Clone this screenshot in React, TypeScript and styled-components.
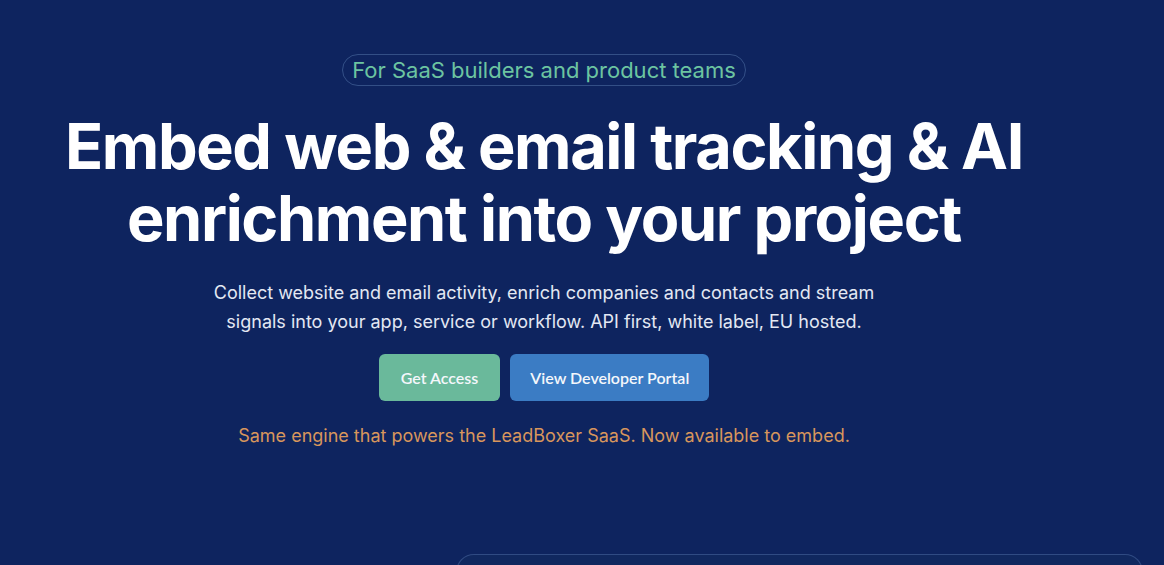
import React from "react"
import styled, {createGlobalStyle} from "styled-components"

const GlobalStyle = createGlobalStyle`
  html, body {
    margin: 0;
    padding: 0;
    background: #0e245f;
    font-family: Inter, "Noto Sans", sans-serif;
    color: #fff;
  }
`

const Page = styled.div`
  height: 565px;
  overflow: hidden;
`

const Hero = styled.section`
  width: 1088px;
  display: flex;
  flex-direction: column;
  align-items: center;
  padding-top: 54px;
  text-align: center;
`

const Pill = styled.div`
  display: inline-flex;
  align-items: center;
  height: 30px;
  padding: 0 9px;
  border: 1px solid rgba(120, 160, 210, 0.35);
  border-radius: 999px;
  color: #6cc4a1;
  font-size: 22px;
  line-height: 1;
`

const Title = styled.h1`
  margin: 24px 0 0;
  font-size: 63px;
  line-height: 72px;
  font-weight: 700;
  letter-spacing: -1.4px;
  color: #ffffff;
`

const Lead = styled.p`
  margin: 24px 0 0;
  width: 680px;
  font-size: 18px;
  line-height: 29px;
  color: #e3e8f3;
`

const Actions = styled.div`
  display: flex;
  gap: 10px;
  margin-top: 18px;
`

const Button = styled.button<{$tone: "green" | "blue"}>`
  height: 47px;
  padding: 0 ${p => (p.$tone === "green" ? 22 : 20)}px;
  border: none;
  border-radius: 6px;
  font-family: Lato, Inter, sans-serif;
  font-size: 16px;
  font-weight: 600;
  color: #f4f7fb;
  background: ${p => (p.$tone === "green" ? "#6ab99b" : "#3b7cc4")};
  cursor: pointer;
`

const Note = styled.p`
  margin: 24px 0 0;
  font-size: 18px;
  color: #d8965c;
`

const CardRow = styled.div`
  display: flex;
  padding: 0 21px 0 456px;
  margin-top: 108px;
`

const Card = styled.div`
  flex: 1;
  height: 200px;
  border: 1px solid rgba(110, 140, 200, 0.35);
  border-radius: 18px;
  background: #10285f;
`

export default function App() {
  return (
    <Page>
      <GlobalStyle />
      <Hero>
        <Pill>For SaaS builders and product teams</Pill>
        <Title>
          Embed web &amp; email tracking &amp; AI
          <br />
          enrichment into your project
        </Title>
        <Lead>
          Collect website and email activity, enrich companies and contacts and
          stream signals into your app, service or workflow. API first, white
          label, EU hosted.
        </Lead>
        <Actions>
          <Button $tone="green">Get Access</Button>
          <Button $tone="blue">View Developer Portal</Button>
        </Actions>
        <Note>Same engine that powers the LeadBoxer SaaS. Now available to embed.</Note>
      </Hero>
      <CardRow>
        <Card />
      </CardRow>
    </Page>
  )
}
